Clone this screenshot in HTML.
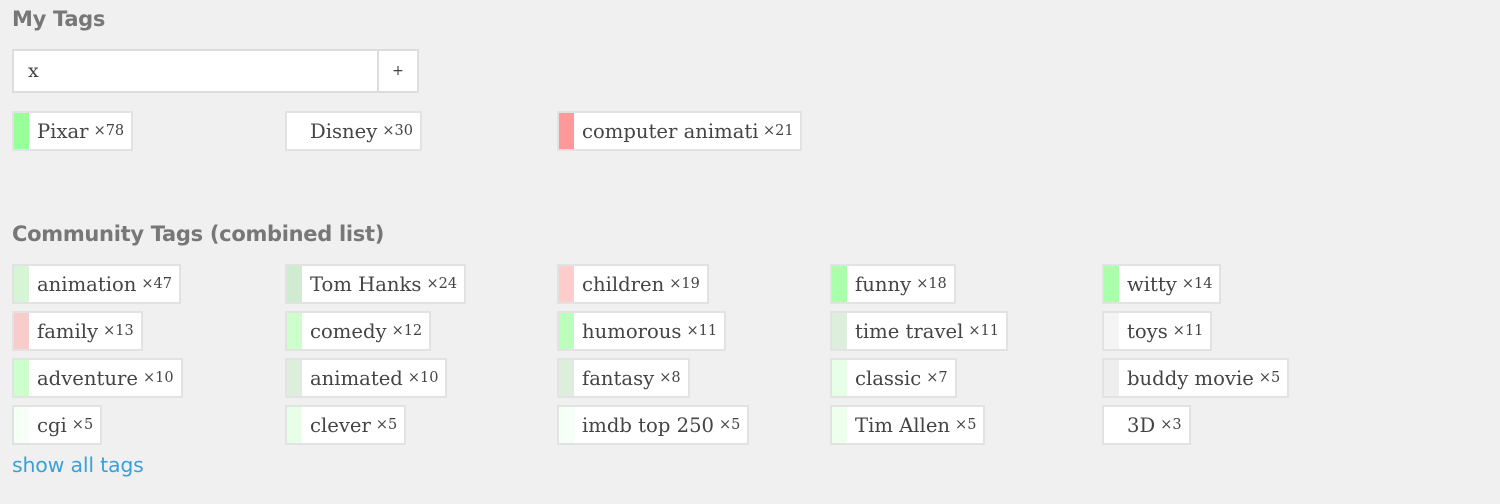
<!DOCTYPE html>
<html><head><meta charset="utf-8"><style>
body{margin:0;background:#f0f0f0;width:1500px;height:504px;position:relative;overflow:hidden;font-family:"DejaVu Serif","Liberation Serif",serif;}
h2{position:absolute;left:12px;margin:0;font-family:"DejaVu Sans","Liberation Sans",sans-serif;font-weight:bold;color:#777;font-size:21px;letter-spacing:-0.3px}
.t{position:absolute;height:36px;background:#fff;border:2px solid #e2e2e2;display:flex;align-items:center;white-space:nowrap;box-sizing:content-box;overflow:hidden}
.t i{display:block;width:15px;height:36px;margin-right:8px;flex:none}
.t span{font-size:19.6px;color:#444}
.t b{font-weight:normal;font-size:14.5px;color:#444;margin-left:5px;margin-right:7px}
.in{position:absolute;left:12px;top:49px;width:407px;height:44px;border:2px solid #ddd;background:#fff;box-sizing:border-box}
.in .x{position:absolute;left:14px;top:9px;font-size:19px;color:#444}
.in .p{position:absolute;right:0;top:0;width:38px;height:40px;border-left:2px solid #ddd;text-align:center;line-height:40px;font-family:"DejaVu Sans",sans-serif;font-size:14px;color:#444}
a{position:absolute;left:12px;top:453px;color:#3aa0d8;font-size:20.5px;font-family:"DejaVu Sans","Liberation Sans",sans-serif;text-decoration:none;letter-spacing:-0.2px}
</style></head><body>
<h2 style="top:7px">My Tags</h2>
<div class="in"><span class="x">x</span><span class="p">+</span></div>
<div class="t" style="left:12px;top:111px"><i style="background:#99ff99"></i><span>Pixar</span><b>×78</b></div>
<div class="t" style="left:285px;top:111px"><i style="background:#fff"></i><span>Disney</span><b>×30</b></div>
<div class="t" style="left:557px;top:111px;width:241px"><i style="background:#ff9999"></i><span style="width:176px;overflow:hidden;display:inline-block;flex:none">computer animation</span><b>×21</b></div>
<h2 style="top:222px">Community Tags (combined list)</h2>
<div class="t" style="left:12px;top:264px"><i style="background:#d5f5d5"></i><span>animation</span><b>×47</b></div>
<div class="t" style="left:285px;top:264px"><i style="background:#d0ecd0"></i><span>Tom Hanks</span><b>×24</b></div>
<div class="t" style="left:557px;top:264px"><i style="background:#ffcccc"></i><span>children</span><b>×19</b></div>
<div class="t" style="left:830px;top:264px"><i style="background:#aaffaa"></i><span>funny</span><b>×18</b></div>
<div class="t" style="left:1102px;top:264px"><i style="background:#aaffaa"></i><span>witty</span><b>×14</b></div>
<div class="t" style="left:12px;top:311px"><i style="background:#f9cccc"></i><span>family</span><b>×13</b></div>
<div class="t" style="left:285px;top:311px"><i style="background:#ccffcc"></i><span>comedy</span><b>×12</b></div>
<div class="t" style="left:557px;top:311px"><i style="background:#bbffbb"></i><span>humorous</span><b>×11</b></div>
<div class="t" style="left:830px;top:311px"><i style="background:#ddeedd"></i><span>time travel</span><b>×11</b></div>
<div class="t" style="left:1102px;top:311px"><i style="background:#f4f4f4"></i><span>toys</span><b>×11</b></div>
<div class="t" style="left:12px;top:358px"><i style="background:#ccffcc"></i><span>adventure</span><b>×10</b></div>
<div class="t" style="left:285px;top:358px"><i style="background:#ddeedd"></i><span>animated</span><b>×10</b></div>
<div class="t" style="left:557px;top:358px"><i style="background:#ddeedd"></i><span>fantasy</span><b>×8</b></div>
<div class="t" style="left:830px;top:358px"><i style="background:#e6ffe6"></i><span>classic</span><b>×7</b></div>
<div class="t" style="left:1102px;top:358px"><i style="background:#eeeeee"></i><span>buddy movie</span><b>×5</b></div>
<div class="t" style="left:12px;top:405px"><i style="background:#f5fff5"></i><span>cgi</span><b>×5</b></div>
<div class="t" style="left:285px;top:405px"><i style="background:#e6ffe6"></i><span>clever</span><b>×5</b></div>
<div class="t" style="left:557px;top:405px"><i style="background:#f5fff5"></i><span>imdb top 250</span><b>×5</b></div>
<div class="t" style="left:830px;top:405px"><i style="background:#eeffee"></i><span>Tim Allen</span><b>×5</b></div>
<div class="t" style="left:1102px;top:405px"><i style="background:#fff"></i><span>3D</span><b>×3</b></div>
<a href="#">show all tags</a>
</body></html>
